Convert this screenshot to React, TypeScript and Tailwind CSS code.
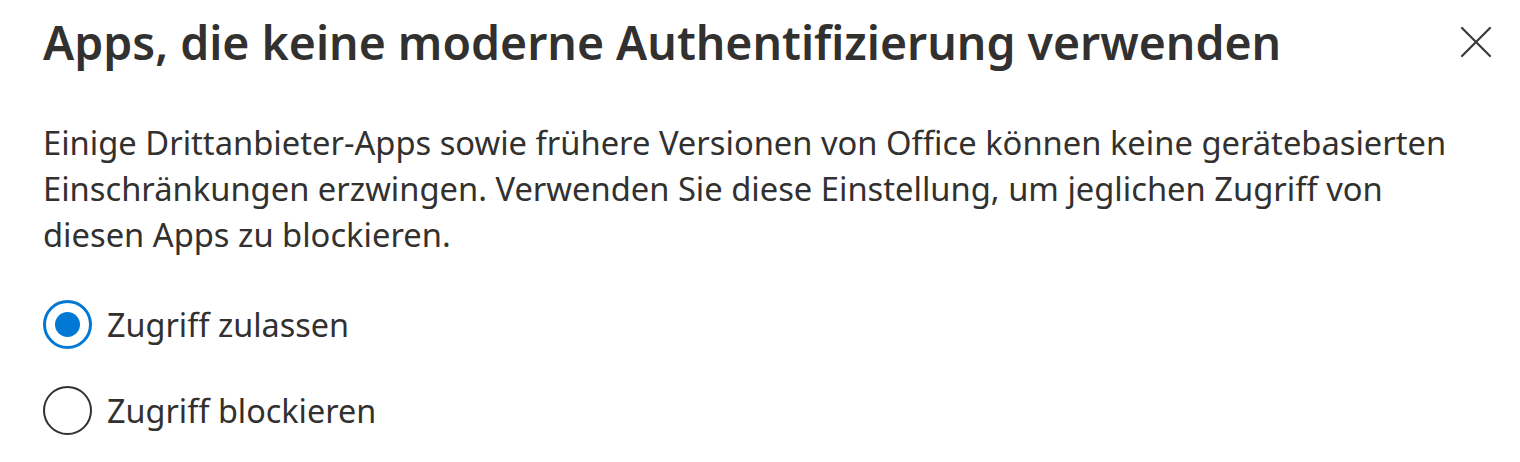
import React from "react";

function Radio({ checked, label }: { checked: boolean; label: string }) {
  return (
    <div className="flex items-center gap-[15px] h-[50px]">
      <div
        className={
          "w-[49px] h-[49px] rounded-full flex items-center justify-center " +
          (checked ? "border-[3px] border-[#0078d4]" : "border-[2px] border-[#323130]")
        }
      >
        {checked && <div className="w-[25px] h-[25px] rounded-full bg-[#0078d4]" />}
      </div>
      <span className="text-[32.4px] leading-none text-[#323130]">{label}</span>
    </div>
  );
}

export default function App() {
  return (
    <div
      className="w-[1520px] h-[462px] bg-white pl-[43px] pr-[28px] pt-[12px] text-[#323130]"
      style={{ fontFamily: '"Noto Sans", "Open Sans", sans-serif' }}
    >
      <div className="flex items-start justify-between">
        <h1 className="text-[46.4px] leading-[60px] font-semibold text-[#323130]">
          Apps, die keine moderne Authentifizierung verwenden
        </h1>
        <button className="mt-[14px] w-[32px] h-[32px] flex items-center justify-center">
          <svg width="32" height="32" viewBox="0 0 32 32" fill="none" stroke="#3b3a39" strokeWidth="2.2" strokeLinecap="round">
            <path d="M2 2 L30 30 M30 2 L2 30" />
          </svg>
        </button>
      </div>
      <p className="mt-[48px] text-[32.7px] leading-[46px] text-[#323130] whitespace-nowrap">
        Einige Drittanbieter-Apps sowie frühere Versionen von Office können keine gerätebasierten
        <br />
        Einschränkungen erzwingen. Verwenden Sie diese Einstellung, um jeglichen Zugriff von
        <br />
        diesen Apps zu blockieren.
      </p>
      <div className="mt-[41px] flex flex-col gap-[36px]">
        <Radio checked label="Zugriff zulassen" />
        <Radio checked={false} label="Zugriff blockieren" />
      </div>
    </div>
  );
}
